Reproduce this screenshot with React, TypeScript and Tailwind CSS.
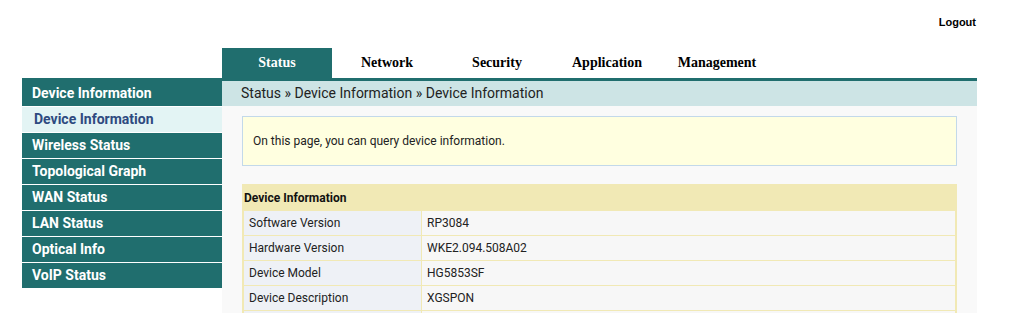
import React from "react";

const sideItems = [
  "Wireless Status",
  "Topological Graph",
  "WAN Status",
  "LAN Status",
  "Optical Info",
  "VoIP Status",
];

const tabs = ["Status", "Network", "Security", "Application", "Management"];

const rows: [string, string][] = [
  ["Software Version", "RP3084"],
  ["Hardware Version", "WKE2.094.508A02"],
  ["Device Model", "HG5853SF"],
  ["Device Description", "XGSPON"],
  ["", ""],
];

export default function App() {
  return (
    <div className="w-[1009px] bg-white font-['Roboto',sans-serif] text-[#222]">
      <div className="flex h-[48px] justify-end pr-[33px] pt-[16px]">
        <span className="font-['Liberation_Sans',Arial,sans-serif] text-[11px] font-bold leading-[13px] text-black">
          Logout
        </span>
      </div>
      <div className="flex pl-[22px]">
        <div className="w-[200px] pt-[30px]">
          <div className="flex h-[28px] items-center bg-[#206e6e] pl-[10px] pt-[2px] text-[14px] font-bold text-white">
            Device Information
          </div>
          <div className="mt-px flex h-[25px] items-center bg-[#e3f4f4] pl-[12px] text-[14px] font-bold text-[#2e4a80]">
            Device Information
          </div>
          {sideItems.map((s) => (
            <div
              key={s}
              className="mt-px flex h-[25px] items-center bg-[#206e6e] pl-[10px] text-[14px] font-bold text-white"
            >
              {s}
            </div>
          ))}
        </div>
        <div className="w-[755px]">
          <div className="flex h-[30px]">
            {tabs.map((t, i) => (
              <div
                key={t}
                className={
                  "flex w-[110px] items-center justify-center pb-[2px] font-['Liberation_Serif','Times_New_Roman',serif] text-[14px] font-bold " +
                  (i === 0 ? "bg-[#206e6e] text-white" : "text-black")
                }
              >
                {t}
              </div>
            ))}
          </div>
          <div className="h-[3px] bg-[#206e6e]" />
          <div className="flex h-[25px] items-center bg-[#cde4e5] pl-[19px] text-[14px] text-[#222]">
            Status » Device Information » Device Information
          </div>
          <div className="bg-[#f9f9f9] px-[20px] pt-[10px] pb-[20px]">
            <div className="flex h-[50px] items-center border border-[#c3d9ea] bg-[#ffffe0] pl-[10px] text-[12px] text-[#222]">
              On this page, you can query device information.
            </div>
            <div className="mt-[18px] bg-[#f1e9b5] px-[2px] pb-px">
              <div className="flex h-[27px] items-center pt-[1px] text-[12px] font-bold text-[#111]">
                Device Information
              </div>
              <div className="flex flex-col gap-px">
                {rows.map(([k, v], i) => (
                  <div key={i} className="flex h-[24px] gap-px text-[12px]">
                    <div className="flex w-[177px] items-center bg-[#eef1f6] pl-[5px]">{k}</div>
                    <div className="flex flex-1 items-center bg-[#f7f7f7] pl-[5px]">{v}</div>
                  </div>
                ))}
              </div>
            </div>
          </div>
        </div>
      </div>
    </div>
  );
}
